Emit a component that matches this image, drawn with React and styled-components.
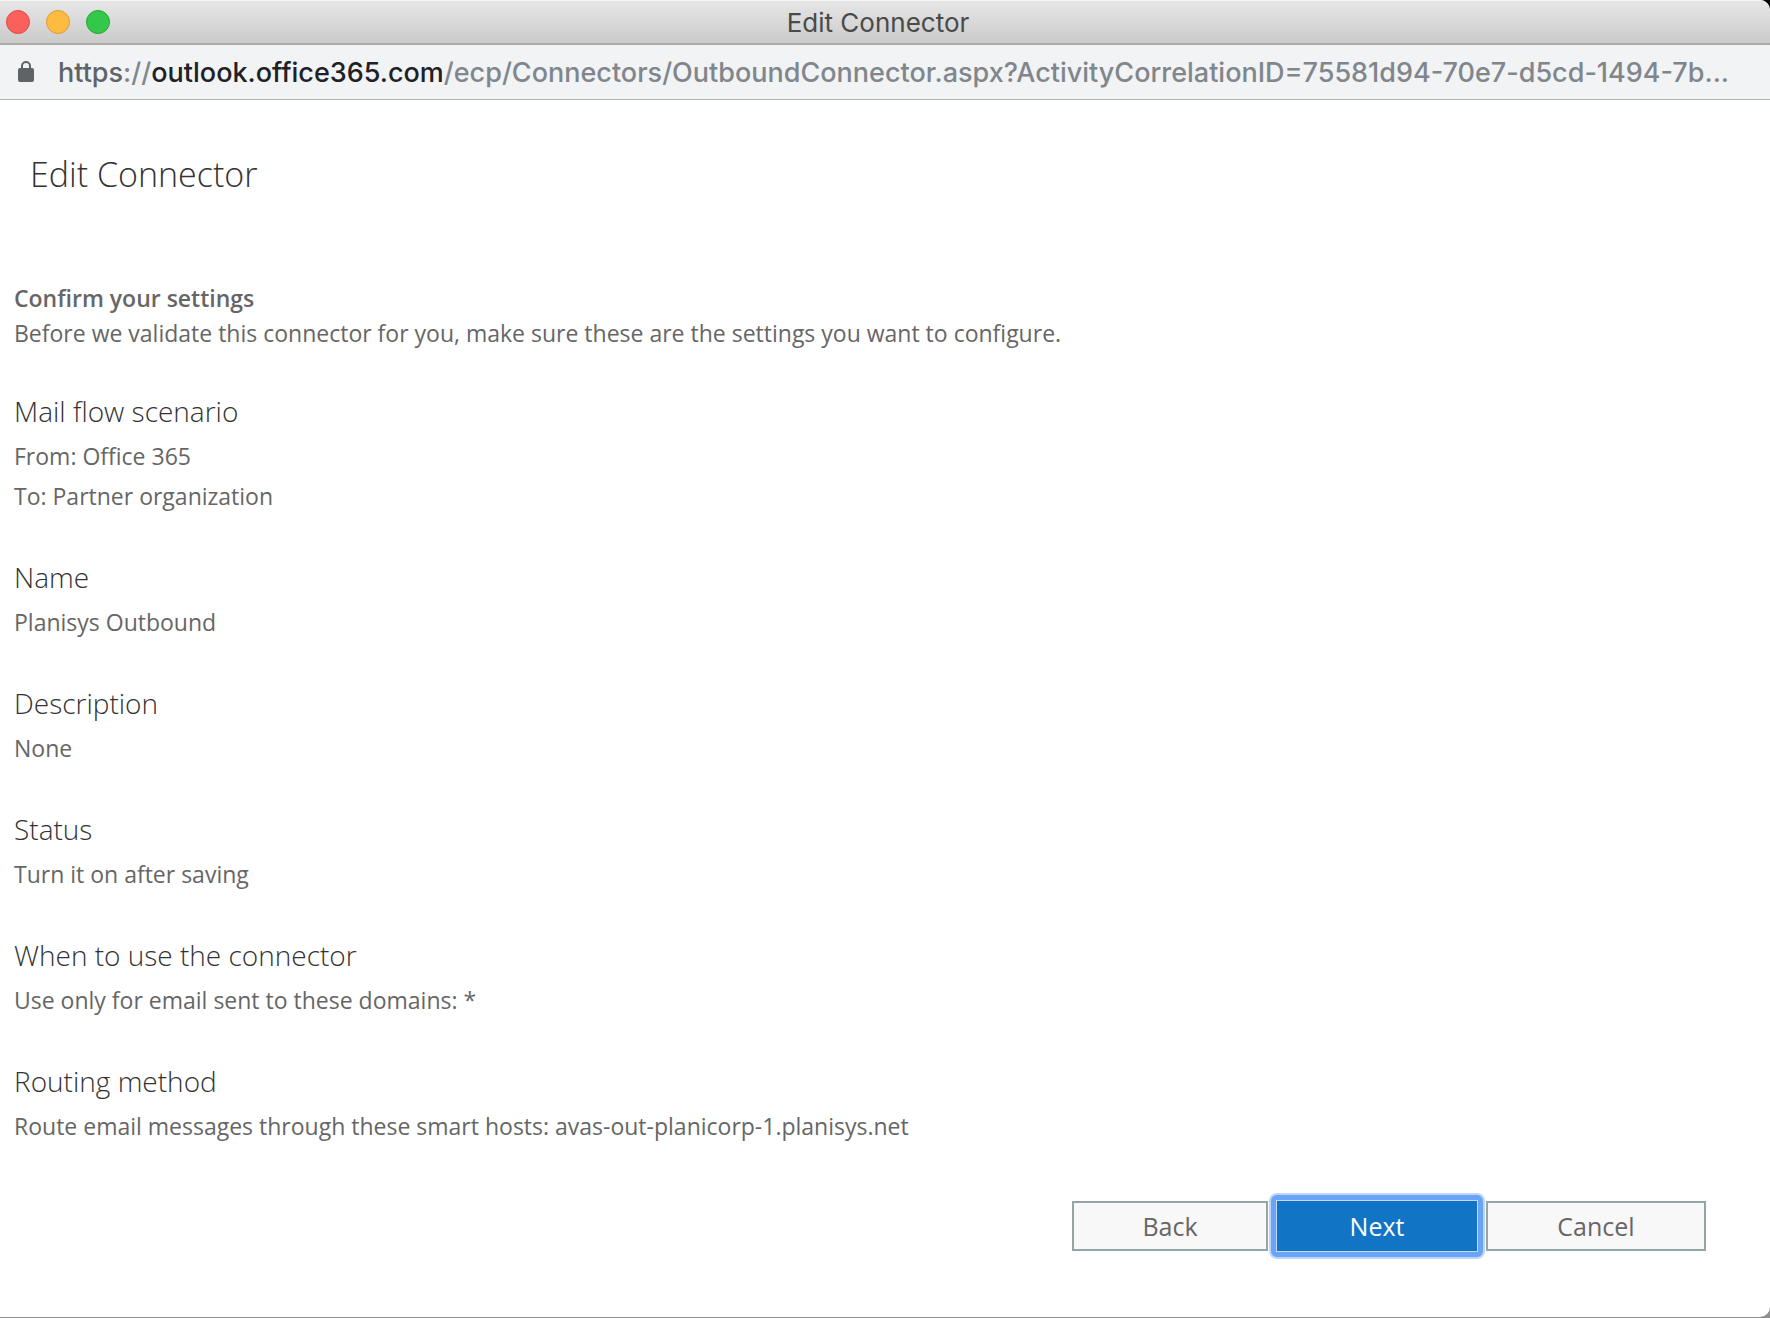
import React from "react";
import styled, { createGlobalStyle } from "styled-components";

const GlobalStyle = createGlobalStyle`
  * {
    box-sizing: border-box;
  }

  body {
    margin: 0;
    background: #8f8f8f;
    font-family: "Open Sans", "Noto Sans", sans-serif;
    color: #666;
  }

  h1, h2, h3, p {
    margin: 0;
  }
`;

const Backdrop = styled.div`
  min-height: 100vh;
  display: flex;
  flex-direction: column;
  padding-bottom: 2px;
  background: linear-gradient(#000 50%, #8f8f8f 50%);
`;

const Window = styled.div`
  flex: 1;
  display: flex;
  flex-direction: column;
  background: #fff;
  border-radius: 0 10px 10px 0;
  overflow: hidden;
`;

const TitleBar = styled.header`
  display: grid;
  grid-template-columns: 1fr auto 1fr;
  align-items: center;
  height: 45px;
  padding: 0 20px 0 6px;
  background: linear-gradient(#e6e6e6, #cbcbcb);
  border-top: 1px solid #f5f5f5;
  border-bottom: 2px solid #a9a9a9;
`;

const Lights = styled.div`
  display: flex;
  gap: 16px;
`;

const Light = styled.button`
  width: 24px;
  height: 24px;
  padding: 0;
  border: 1px solid ${(props) => props.$edge};
  border-radius: 50%;
  background: ${(props) => props.$color};
`;

const WindowTitle = styled.span`
  padding-top: 2px;
  font: 400 26px/32px Inter, sans-serif;
  color: #4a4a4a;
`;

const AddressBar = styled.div`
  display: flex;
  align-items: center;
  gap: 24px;
  height: 55px;
  padding: 0 32px 0 18px;
  background: #f1f3f4;
  border-bottom: 1px solid #adb1b4;

  svg {
    flex: none;
  }
`;

const Address = styled.a`
  min-width: 0;
  padding-top: 2px;
  overflow: hidden;
  white-space: nowrap;
  font: 500 27px/36px Inter, sans-serif;
  color: #80868b;
  text-decoration: none;
`;

const Scheme = styled.span`
  color: #5f6368;
`;

const Host = styled.span`
  color: #202124;
`;

const Page = styled.main`
  flex: 1;
  padding: 50px 64px 66px 14px;
`;

const PageTitle = styled.h1`
  padding-left: 16px;
  font-size: 34px;
  line-height: 48px;
  font-weight: 300;
  color: #333;
`;

const Intro = styled.section`
  margin-top: 82px;
`;

const IntroTitle = styled.h2`
  font-size: 23px;
  line-height: 36px;
  font-weight: 600;
`;

const Text = styled.p`
  font-size: 23px;
  line-height: 40px;
`;

const IntroText = styled(Text)`
  line-height: 34px;
`;

const Setting = styled.section`
  margin-top: 36px;
`;

const SettingTitle = styled.h3`
  font-size: 28px;
  line-height: 50px;
  font-weight: 300;
  color: #333;
`;

const Actions = styled.div`
  display: flex;
  justify-content: flex-end;
  gap: 9px;
  margin-top: 55px;
`;

const Button = styled.button`
  width: ${(props) => props.$width};
  height: 50px;
  padding: 0;
  border: 2px solid #95a5a6;
  background: #f8f8f8;
  font: 400 25px/36px "Open Sans", "Noto Sans", sans-serif;
  color: #666;
`;

const FocusRing = styled.div`
  margin: -8px;
  padding: 6px;
  border: 2px solid #bcd5fb;
  border-radius: 8px;
  background: #6ba3f5;
`;

const PrimaryButton = styled(Button)`
  display: block;
  border: 0;
  background: #1174c4;
  color: #fff;
  box-shadow: 0 0 0 1px #c5dafb;
  outline: none;
`;

const settings = [
  { title: "Mail flow scenario", lines: ["From: Office 365", "To: Partner organization"] },
  { title: "Name", lines: ["Planisys Outbound"] },
  { title: "Description", lines: ["None"] },
  { title: "Status", lines: ["Turn it on after saving"] },
  { title: "When to use the connector", lines: ["Use only for email sent to these domains: *"] },
  {
    title: "Routing method",
    lines: ["Route email messages through these smart hosts: avas-out-planicorp-1.planisys.net"],
  },
];

function LockIcon() {
  return (
    <svg width="16" height="22" viewBox="0 0 16 22" aria-hidden="true">
      <rect x="0" y="7" width="16" height="14" rx="2" fill="#5f6368" />
      <path d="M4 8V5a4 4 0 0 1 8 0v3" fill="none" stroke="#5f6368" strokeWidth="2" />
    </svg>
  );
}

function App() {
  return (
    <Backdrop>
      <GlobalStyle />
      <Window>
        <TitleBar>
          <Lights>
            <Light aria-label="Close" $color="#fc605c" $edge="#de4a46" />
            <Light aria-label="Minimize" $color="#fdbc40" $edge="#dd9d32" />
            <Light aria-label="Zoom" $color="#34c84a" $edge="#24a732" />
          </Lights>
          <WindowTitle>Edit Connector</WindowTitle>
        </TitleBar>

        <AddressBar>
          <LockIcon />
          <Address href="#">
            <Scheme>https</Scheme>://<Host>outlook.office365.com</Host>
            /ecp/Connectors/OutboundConnector.aspx?ActivityCorrelationID=75581d94-70e7-d5cd-1494-7b...
          </Address>
        </AddressBar>

        <Page>
          <PageTitle>Edit Connector</PageTitle>

          <Intro>
            <IntroTitle>Confirm your settings</IntroTitle>
            <IntroText>
              Before we validate this connector for you, make sure these are the settings you want to configure.
            </IntroText>
          </Intro>

          {settings.map((setting) => (
            <Setting key={setting.title}>
              <SettingTitle>{setting.title}</SettingTitle>
              {setting.lines.map((line) => (
                <Text key={line}>{line}</Text>
              ))}
            </Setting>
          ))}

          <Actions>
            <Button type="button" $width="196px">Back</Button>
            <FocusRing>
              <PrimaryButton type="button" $width="200px">Next</PrimaryButton>
            </FocusRing>
            <Button type="button" $width="220px">Cancel</Button>
          </Actions>
        </Page>
      </Window>
    </Backdrop>
  );
}

export default App;
